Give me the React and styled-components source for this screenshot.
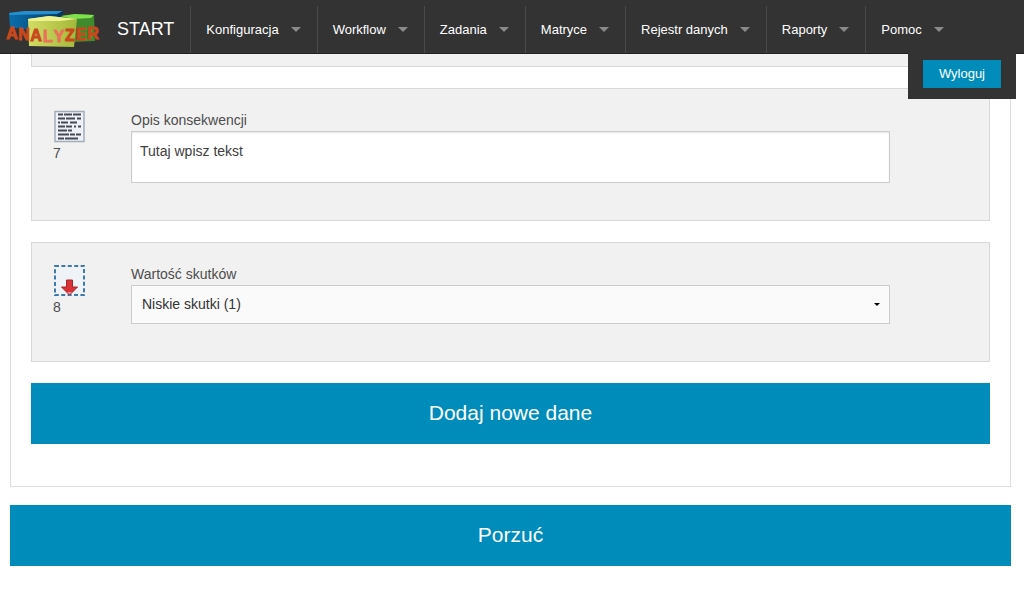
import React from "react";
import styled, { createGlobalStyle } from "styled-components";

const menu = [
  "Konfiguracja",
  "Workflow",
  "Zadania",
  "Matryce",
  "Rejestr danych",
  "Raporty",
  "Pomoc",
];

function Logo() {
  return (
    <LogoSvg viewBox="0 0 96 40" aria-hidden="true">
      <defs>
        <linearGradient id="blue" x1="0" x2="1">
          <stop offset="0" stopColor="#0a6fae" />
          <stop offset="1" stopColor="#04365c" />
        </linearGradient>
        <linearGradient id="lime" x1="0" x2="1">
          <stop offset="0" stopColor="#d3dc62" />
          <stop offset="1" stopColor="#a3b83a" />
        </linearGradient>
      </defs>
      <path d="M4 3 L20 1 L58 1 L58 9 L24 20 L5 17 Z" fill="url(#blue)" />
      <path d="M4 3 L20 1 L58 1 L52 4 L5 5 Z" fill="#2590d0" />
      <path d="M56 6 L70 4 L89 5 L90 31 L68 32 Z" fill="#3f8a2c" />
      <path d="M56 6 L70 4 L89 5 L86 8 L68 9 Z" fill="#7fe04c" />
      <path d="M23 9 L44 6 L72 9 L69 37 L24 36 Z" fill="url(#lime)" />
      <path d="M23 9 L44 6 L72 9 L55 11 L24 11 Z" fill="#eef291" />
      <g
        fontFamily="'Liberation Sans', Arial, sans-serif"
        fontWeight="bold"
        fontSize="16"
        fill="#c9481c"
        stroke="#c9481c"
        strokeWidth="1"
        textAnchor="middle"
      >
        <text x="7" y="29">A</text>
        <text x="19" y="30">N</text>
        <text x="31" y="31">A</text>
        <text x="43" y="32" fill="#e8735c" stroke="#e8735c">L</text>
        <text x="54" y="32" fill="#e8735c" stroke="#e8735c">Y</text>
        <text x="65" y="31">Z</text>
        <text x="76" y="30">E</text>
        <text x="88" y="29">R</text>
      </g>
    </LogoSvg>
  );
}

function TextIcon() {
  return (
    <FieldIcon viewBox="0 0 33 33" aria-hidden="true">
      <rect x="2" y="1.5" width="29" height="30" fill="#eef1f9" stroke="#a3adba" strokeWidth="1.5" />
      <g stroke="#474a52" strokeWidth="1.8">
        <path d="M5 4.5h5M11 4.5h8M20 4.5h8" />
        <path d="M5 8.5h7M13 8.5h9M24 8.5h4" />
        <path d="M5 12.5h2M8 12.5h7M17 12.5h7" />
        <path d="M5 16.5h7M13 16.5h6M21 16.5h2M25 16.5h3" />
        <path d="M5 20.5h9M15 20.5h4" />
        <path d="M5 24.5h11M17 24.5h5M23 24.5h5" />
        <path d="M5 28.5h6M12 28.5h13" />
      </g>
    </FieldIcon>
  );
}

function SelectIcon() {
  return (
    <FieldIcon viewBox="0 0 33 33" aria-hidden="true">
      <rect x="2" y="2" width="29" height="29" fill="#eff3f7" stroke="#3d7aaa" strokeWidth="2" strokeDasharray="4 2.4" />
      <path d="M13.5 16h6v7h5l-8 8-8-8h5z" fill="#da3136" stroke="#a3262c" strokeWidth="1" />
      <path d="M14 28h5l-2.500 2.500z" fill="#ee8e9a" />
    </FieldIcon>
  );
}

export default function App() {
  return (
    <>
      <GlobalStyle />
      <TopBar>
        <Brand href="#start">
          <Logo />
          START
        </Brand>
        <Menu>
          {menu.map((name) => (
            <li key={name}>
              <MenuLink href="#menu">
                {name}
                <Arrow />
              </MenuLink>
            </li>
          ))}
        </Menu>
        <LogoutBox>
          <LogoutButton type="button">Wyloguj</LogoutButton>
        </LogoutBox>
      </TopBar>
      <Content>
        <Panel>
          <CardEnd />
          <Card>
            <IconColumn>
              <TextIcon />7
            </IconColumn>
            <Field>
              <Label htmlFor="opis">Opis konsekwencji</Label>
              <TextArea id="opis" defaultValue="Tutaj wpisz tekst" />
            </Field>
          </Card>
          <Card>
            <IconColumn>
              <SelectIcon />8
            </IconColumn>
            <Field>
              <Label htmlFor="skutki">Wartość skutków</Label>
              <SelectWrapper>
                <Select id="skutki">
                  <option>Niskie skutki (1)</option>
                </Select>
                <svg width="6" height="3" viewBox="0 0 6 3" aria-hidden="true">
                  <path d="M0 0h6L3 3z" fill="#000" />
                </svg>
              </SelectWrapper>
            </Field>
          </Card>
          <Button type="button">Dodaj nowe dane</Button>
        </Panel>
        <Button type="button">Porzuć</Button>
      </Content>
    </>
  );
}

const GlobalStyle = createGlobalStyle`
  * {
    box-sizing: border-box;
  }
  body {
    margin: 0;
    background: #fff;
    color: #4d4d4d;
    font-family: "Liberation Sans", Arial, sans-serif;
    font-size: 14px;
  }
  button, select, textarea {
    font-family: inherit;
  }
`;

const TopBar = styled.nav`
  position: relative;
  display: flex;
  height: 54px;
  padding-top: 6px;
  background: #333;
  border-bottom: 1px solid #222;
`;

const Brand = styled.a`
  display: flex;
  align-items: center;
  gap: 16px;
  padding: 0 16px 0 5px;
  color: #fff;
  font-size: 18px;
  text-decoration: none;
`;

const LogoSvg = styled.svg`
  width: 96px;
  height: 40px;
`;

const Menu = styled.ul`
  display: flex;
  margin: 0;
  padding: 0;
  list-style: none;
`;

const MenuLink = styled.a`
  display: flex;
  align-items: center;
  gap: 12px;
  height: 100%;
  padding: 0 16px 0 15px;
  border-left: 1px solid #4a4a4a;
  color: #fff;
  font-size: 13px;
  white-space: nowrap;
  text-decoration: none;
`;

const Arrow = styled.span`
  border: 5px solid transparent;
  border-top-color: #8a8a8a;
  border-bottom: 0;
`;

const LogoutBox = styled.div`
  position: absolute;
  top: 100%;
  right: 8px;
  padding: 7px 15px 11px;
  background: #333;
`;

const LogoutButton = styled.button`
  display: block;
  height: 28px;
  padding: 0 16px 1px;
  border: 0;
  background: #008cba;
  color: #fff;
  font-size: 13px;
`;

const Content = styled.main`
  padding: 0 13px 0 10px;
`;

const Panel = styled.section`
  margin-bottom: 18px;
  padding: 0 20px 42px;
  border: 1px solid #ddd;
  border-top: 0;
`;

const Card = styled.div`
  display: grid;
  grid-template-columns: 79px 1fr 79px;
  margin-bottom: 21px;
  padding: 21px 20px 37px;
  background: #f1f1f1;
  border: 1px solid #d8d8d8;
`;

const CardEnd = styled.div`
  height: 13px;
  margin-bottom: 21px;
  background: #f1f1f1;
  border: 1px solid #d8d8d8;
  border-top: 0;
`;

const IconColumn = styled.div`
  display: flex;
  flex-direction: column;
  padding-left: 1px;
  line-height: 20px;
`;

const FieldIcon = styled.svg`
  width: 33px;
  height: 33px;
`;

const Field = styled.div`
  display: flex;
  flex-direction: column;
`;

const Label = styled.label`
  line-height: 21px;
`;

const TextArea = styled.textarea`
  display: block;
  width: 100%;
  height: 52px;
  padding: 9px 8px;
  border: 1px solid #ccc;
  background: #fff;
  color: #404040;
  font-size: 14px;
  line-height: 21px;
  resize: none;
  box-shadow: inset 0 1px 2px rgba(0, 0, 0, 0.1);
`;

const SelectWrapper = styled.div`
  position: relative;
  svg {
    position: absolute;
    top: 18px;
    right: 10px;
    pointer-events: none;
  }
`;

const Select = styled.select`
  display: block;
  width: 100%;
  height: 39px;
  padding: 0 10px 1px;
  appearance: none;
  border: 1px solid #ccc;
  border-radius: 0;
  background: #fafafa;
  color: #333;
  font-size: 14px;
`;

const Button = styled.button`
  display: block;
  width: 100%;
  height: 61px;
  padding: 0 16px 2px;
  border: 0;
  background: #008cba;
  color: #fff;
  font-size: 21px;
`;
